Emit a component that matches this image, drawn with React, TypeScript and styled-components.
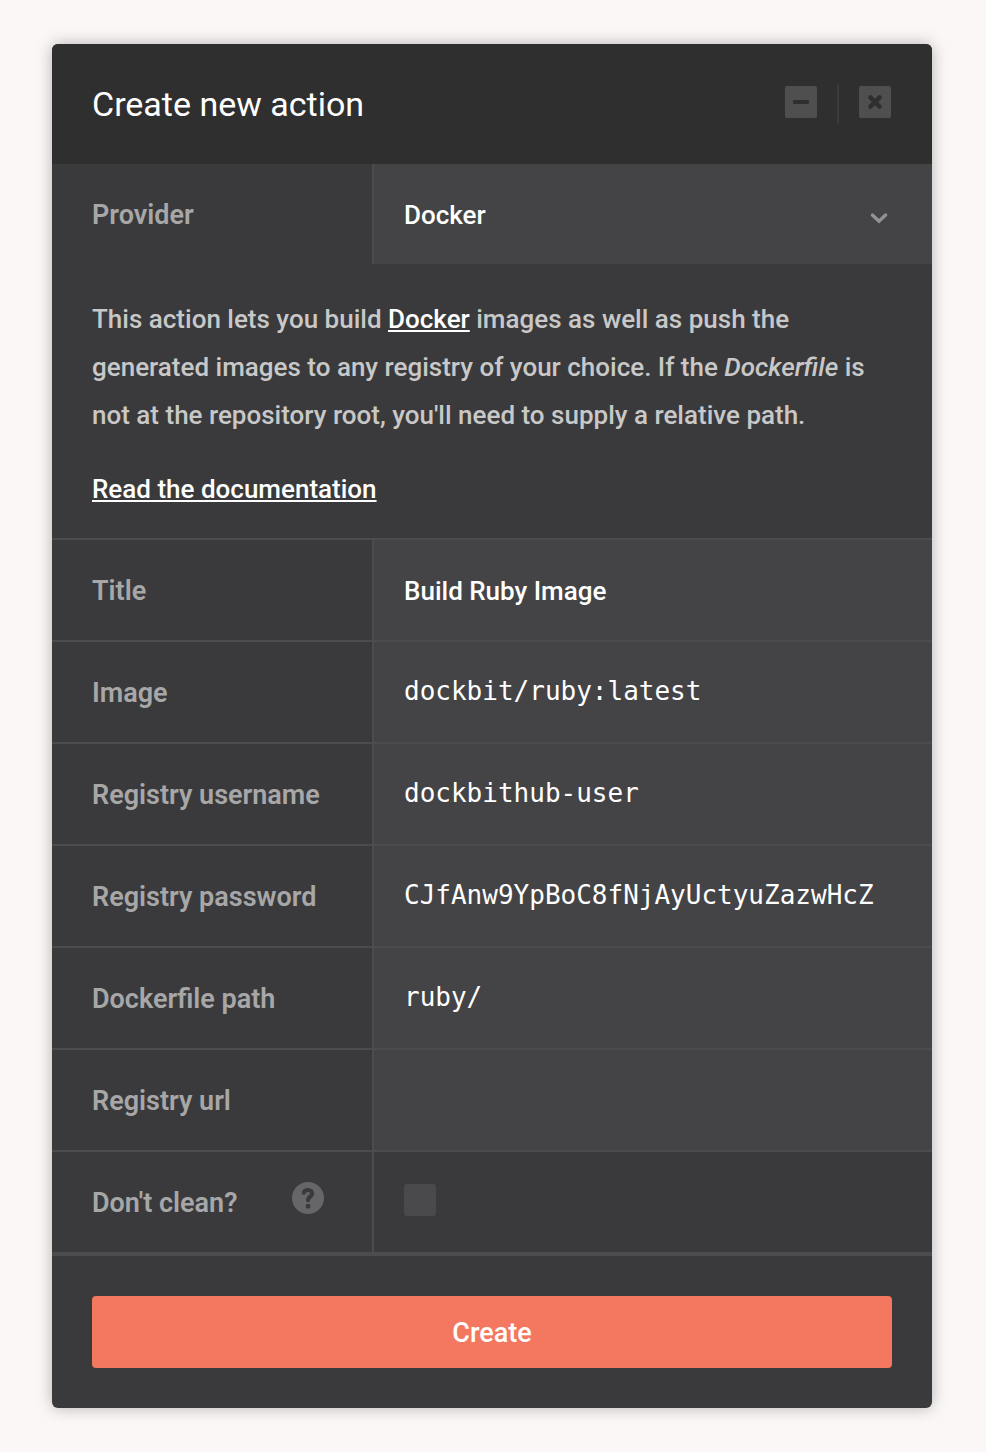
import React from "react";
import styled, { createGlobalStyle } from "styled-components";

const color = {
  page: "#fbf7f6",
  header: "#2f2f2f",
  panel: "#3a3a3c",
  field: "#444446",
  line: "#4c4c4e",
  label: "#a7a7a8",
  text: "#c8c8c8",
  accent: "#f4775f",
};

const sans = `Roboto, "Liberation Sans", sans-serif`;
const mono = `"DejaVu Sans Mono", "Liberation Mono", monospace`;

const GlobalStyle = createGlobalStyle`
  *, *::before, *::after { box-sizing: border-box; }
  body {
    margin: 0;
    background: ${color.page};
    color: #fff;
    font-family: ${sans};
    font-size: 26px;
    font-weight: 500;
  }
`;

const Page = styled.main`
  padding: 44px 54px 44px 52px;
`;

const Panel = styled.form`
  margin: 0;
  overflow: hidden;
  border-radius: 6px;
  background: ${color.panel};
  box-shadow: 0 0 16px rgba(0, 0, 0, 0.28);
`;

const Header = styled.header`
  display: flex;
  align-items: center;
  justify-content: space-between;
  height: 120px;
  padding: 0 41px 0 40px;
  background: ${color.header};
`;

const Heading = styled.h1`
  margin: 0;
  font-size: 34px;
  font-weight: 400;
`;

const WindowControls = styled.div`
  display: flex;
  align-items: flex-start;
  gap: 20px;
  padding: 2px 0;
`;

const Separator = styled.span`
  width: 2px;
  height: 40px;
  margin: -2px 0;
  background: #3b3b3b;
`;

const IconButton = styled.button`
  display: block;
  width: 32px;
  height: 32px;
  padding: 0;
  border: 0;
  border-radius: 2px;
  background: #4f4f4f;
  cursor: pointer;

  svg {
    display: block;
  }
`;

const Row = styled.div<{ $divider?: number }>`
  display: grid;
  grid-template-columns: 322px minmax(0, 1fr);
  grid-auto-rows: minmax(100px, auto);
  border-bottom: ${(p) => p.$divider ?? 2}px solid ${color.line};
`;

const LabelCell = styled.div`
  display: flex;
  align-items: center;
  justify-content: space-between;
  padding: 2px 48px 0 40px;
  border-right: 2px solid ${color.line};
`;

const Label = styled.label`
  color: ${color.label};
  font-size: 27px;
  font-weight: 600;
  line-height: 32px;
  white-space: nowrap;
`;

const ValueCell = styled.div`
  position: relative;
  display: flex;
`;

const TextInput = styled.input<{ $mono?: boolean }>`
  width: 100%;
  height: 100px;
  padding: ${(p) => (p.$mono ? "0 30px 2px" : "2px 30px 0")};
  border: 0;
  border-radius: 0;
  outline: none;
  background: ${color.field};
  color: #fff;
  font-family: ${(p) => (p.$mono ? mono : sans)};
  font-size: 26px;
  font-weight: 500;
`;

const Select = styled.select`
  width: 100%;
  height: 100px;
  padding: 2px 60px 0 30px;
  border: 0;
  border-radius: 0;
  outline: none;
  appearance: none;
  background: ${color.field};
  color: #fff;
  font-family: ${sans};
  font-size: 26px;
  font-weight: 500;
`;

const Chevron = styled.svg`
  position: absolute;
  top: 48px;
  right: 43px;
  pointer-events: none;
`;

const Description = styled.section`
  padding: 31px 40px 25px;
  border-bottom: 2px solid ${color.line};
  color: ${color.text};
  line-height: 48px;

  p {
    margin: 0;
  }

  p + p {
    margin-top: 26px;
  }
`;

const TextLink = styled.a`
  color: #fff;
  text-decoration: underline;
  text-decoration-thickness: 2px;
  text-underline-offset: 2px;
  text-decoration-skip-ink: none;
`;

const HelpButton = styled.button`
  align-self: flex-start;
  width: 32px;
  height: 32px;
  margin-top: 28px;
  padding: 0;
  border: 0;
  background: none;
  cursor: pointer;

  svg {
    display: block;
  }
`;

const Checkbox = styled.input`
  width: 32px;
  height: 32px;
  margin: 32px 30px;
  border-radius: 3px;
  appearance: none;
  background: #4a4a4c;
  cursor: pointer;

  &:checked {
    background: ${color.accent};
  }
`;

const Footer = styled.footer`
  padding: 40px;
`;

const SubmitButton = styled.button`
  display: block;
  width: 100%;
  height: 72px;
  padding: 0;
  border: 0;
  border-radius: 4px;
  background: ${color.accent};
  color: #fff;
  font-family: ${sans};
  font-size: 27px;
  font-weight: 500;
  line-height: 74px;
  cursor: pointer;
`;

const fields = [
  { id: "title", label: "Title", value: "Build Ruby Image", mono: false },
  { id: "image", label: "Image", value: "dockbit/ruby:latest", mono: true },
  { id: "username", label: "Registry username", value: "dockbithub-user", mono: true },
  { id: "password", label: "Registry password", value: "CJfAnw9YpBoC8fNjAyUctyuZazwHcZ", mono: true },
  { id: "path", label: "Dockerfile path", value: "ruby/", mono: true },
  { id: "url", label: "Registry url", value: "", mono: true },
];

export default function App() {
  return (
    <>
      <GlobalStyle />
      <Page>
        <Panel onSubmit={(e) => e.preventDefault()}>
          <Header>
            <Heading>Create new action</Heading>
            <WindowControls>
              <IconButton type="button" aria-label="Minimize">
                <svg width="32" height="32" viewBox="0 0 32 32">
                  <rect x="8" y="14" width="16" height="4" rx="1.2" fill={color.header} />
                </svg>
              </IconButton>
              <Separator />
              <IconButton type="button" aria-label="Close">
                <svg width="32" height="32" viewBox="0 0 32 32">
                  <path
                    d="M11.4 11.4l9.2 9.2M20.6 11.4l-9.2 9.2"
                    stroke={color.header}
                    strokeWidth="4.4"
                    strokeLinecap="round"
                  />
                </svg>
              </IconButton>
            </WindowControls>
          </Header>

          <Row $divider={0}>
            <LabelCell>
              <Label htmlFor="provider">Provider</Label>
            </LabelCell>
            <ValueCell>
              <Select id="provider" defaultValue="docker">
                <option value="docker">Docker</option>
              </Select>
              <Chevron width="20" height="12" viewBox="0 0 20 12" fill="none">
                <path
                  d="M3.4 3.1L10 9.2l6.6-6.1"
                  stroke="#929293"
                  strokeWidth="3.4"
                  strokeLinecap="round"
                />
              </Chevron>
            </ValueCell>
          </Row>

          <Description>
            <p>
              This action lets you build <TextLink href="#docker">Docker</TextLink> images as well as
              push the generated images to any registry of your choice. If the <em>Dockerfile</em> is
              not at the repository root, you'll need to supply a relative path.
            </p>
            <p>
              <TextLink href="#documentation">Read the documentation</TextLink>
            </p>
          </Description>

          {fields.map((field) => (
            <Row key={field.id}>
              <LabelCell>
                <Label htmlFor={field.id}>{field.label}</Label>
              </LabelCell>
              <ValueCell>
                <TextInput
                  id={field.id}
                  type="text"
                  defaultValue={field.value}
                  $mono={field.mono}
                  spellCheck={false}
                  autoComplete="off"
                />
              </ValueCell>
            </Row>
          ))}

          <Row $divider={4}>
            <LabelCell>
              <Label htmlFor="keep">Don't clean?</Label>
              <HelpButton type="button" aria-label="Help">
                <svg width="32" height="32" viewBox="0 0 32 32" fill="none">
                  <circle cx="16" cy="16" r="16" fill="#666668" />
                  <path
                    d="M11.8 10.7C12.4 8.9 14 8 16 8c2.5 0 4.1 1.5 4.1 3.5 0 1.7-1 2.5-2.1 3.3-1.2.9-1.9 1.5-1.9 3v.5"
                    stroke={color.panel}
                    strokeWidth="4.2"
                    strokeLinecap="round"
                  />
                  <rect x="13.9" y="22" width="4.4" height="4.4" rx="1" fill={color.panel} />
                </svg>
              </HelpButton>
            </LabelCell>
            <ValueCell>
              <Checkbox id="keep" type="checkbox" />
            </ValueCell>
          </Row>

          <Footer>
            <SubmitButton type="submit">Create</SubmitButton>
          </Footer>
        </Panel>
      </Page>
    </>
  );
}
